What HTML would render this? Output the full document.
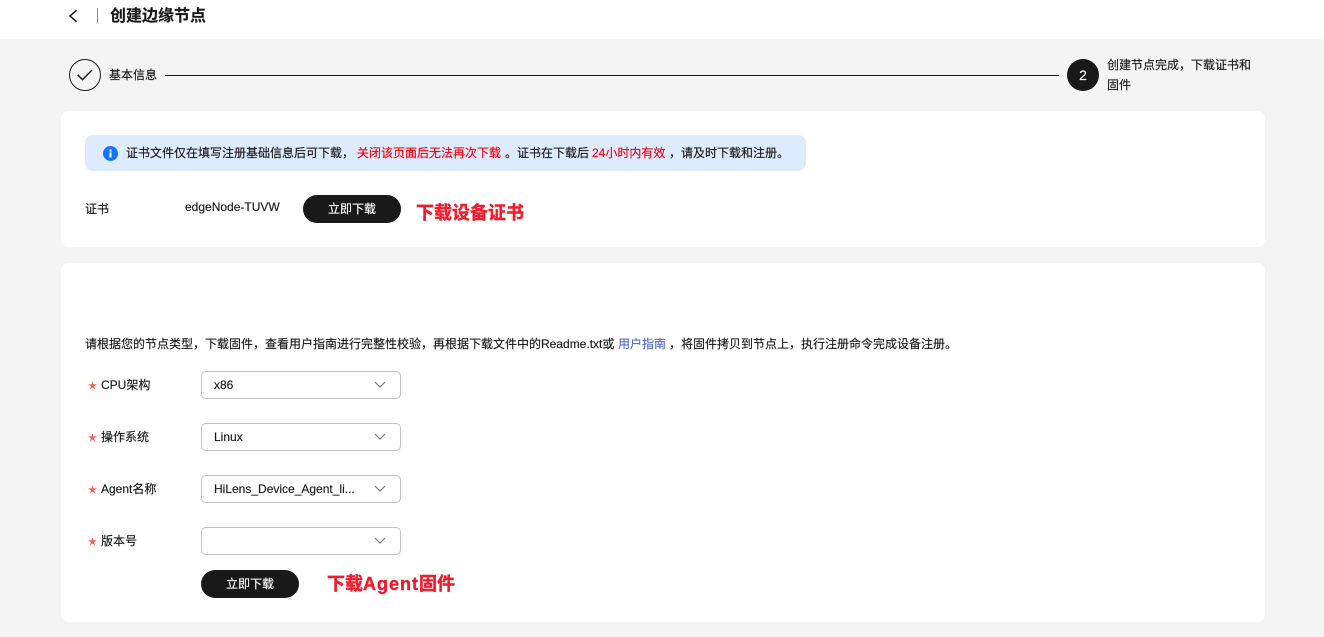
<!DOCTYPE html>
<html lang="zh"><head><meta charset="utf-8"><style>
html,body{margin:0;padding:0}
body{width:1324px;height:637px;overflow:hidden;background:#f4f4f4;position:relative;font:12px/16px "Liberation Sans","Noto Sans CJK SC",sans-serif;color:#191919}
.a{position:absolute;white-space:nowrap;-webkit-text-stroke:.15px currentColor}
.card{position:absolute;background:#fff;border-radius:8px}
.btn{position:absolute;width:98px;height:28px;border-radius:14px;background:#191919;color:#fff;text-align:center;line-height:28px;-webkit-text-stroke:.15px #fff}
.sel{position:absolute;left:201px;width:198px;height:26px;border:1px solid #c2c2c2;border-radius:5px;background:#fff;line-height:26px;-webkit-text-stroke:.15px #191919}
.sel span{position:absolute;left:12px;top:0}
.sel svg{position:absolute;left:172px;top:9px}
.star{position:absolute;left:88px}
.r{color:#f5000f}
.red{position:absolute;color:#f01c2e;font-size:18px;font-weight:bold;line-height:24px;white-space:nowrap;-webkit-text-stroke:.4px #f01c2e}
</style></head><body>
<div class="a" style="left:0;top:0;width:1324px;height:39px;background:#fff"></div>
<svg class="a" style="left:66px;top:8px" width="14" height="16" viewBox="0 0 14 16"><path d="M10.500 2.300L4 8l6.500 5.700" fill="none" stroke="#191919" stroke-width="1.500"/></svg>
<div class="a" style="left:97px;top:8px;width:1px;height:15px;background:#8a8a8a"></div>
<div class="a" style="left:110px;top:5px;font-size:16px;line-height:23px;font-weight:bold">创建边缘节点</div>

<svg class="a" style="left:69px;top:59px" width="32" height="32" viewBox="0 0 32 32"><circle cx="16" cy="16" r="15.500" fill="none" stroke="#191919"/><path d="M8.700 15.800l4.800 4.800 9.500-9.500" fill="none" stroke="#191919" stroke-width="1.500"/></svg>
<div class="a" style="left:109px;top:67px">基本信息</div>
<div class="a" style="left:165px;top:75px;width:894px;height:1px;background:#191919"></div>
<div class="a" style="left:1067px;top:59px;width:32px;height:32px;border-radius:50%;background:#191919;color:#fff;text-align:center;line-height:32px;font-size:14px">2</div>
<div class="a" style="left:1107px;top:55px;line-height:20px;width:150px;white-space:normal">创建节点完成，下载证书和固件</div>

<div class="card" style="left:61px;top:111px;width:1204px;height:136px"></div>
<div class="a" style="left:85px;top:135px;width:721px;height:36px;background:#dcebfd;border-radius:8px"></div>
<svg class="a" style="left:103px;top:146px" width="15" height="15" viewBox="0 0 15 15"><circle cx="7.500" cy="7.500" r="7.500" fill="#1476ff"/><rect x="6.500" y="6.500" width="2" height="5" fill="#fff"/><rect x="6.500" y="3.500" width="2" height="2" fill="#fff"/></svg>
<div class="a" style="left:126px;top:145px">证书文件仅在填写注册基础信息后可下载，</div>
<div class="a r" style="left:357px;top:145px">关闭该页面后无法再次下载</div>
<div class="a" style="left:505px;top:145px">。证书在下载后</div>
<div class="a r" style="left:592px;top:145px">24小时内有效</div>
<div class="a" style="left:669px;top:145px">，</div>
<div class="a" style="left:681px;top:145px">请及时下载和注册。</div>
<div class="a" style="left:85px;top:201px">证书</div>
<div class="a" style="left:185px;top:199px">edgeNode-TUVW</div>
<div class="btn" style="left:303px;top:195px">立即下载</div>
<div class="red" style="left:416px;top:201px">下载设备证书</div>

<div class="card" style="left:61px;top:263px;width:1204px;height:359px"></div>
<div class="a" style="left:85px;top:336px">请根据您的节点类型，下载固件，查看用户指南进行完整性校验，再根据下载文件中的Readme.txt或</div>
<div class="a" style="left:618px;top:336px;color:#526ecc">用户指南</div>
<div class="a" style="left:669px;top:336px">，</div>
<div class="a" style="left:681px;top:336px">将固件拷贝到节点上，执行注册命令完成设备注册。</div>

<svg class="star" style="top:381px" width="9" height="9" viewBox="0 0 9 9"><path d="M4.500 0L5.400 3.300 9 3.400 6 5.300 7.300 8.800 4.500 6.500 1.700 8.800 3 5.300 0 3.400 3.600 3.300Z" fill="#f4605a"/></svg><div class="a" style="left:101px;top:377px">CPU架构</div>
<div class="sel" style="top:371px"><span>x86</span><svg width="12" height="8" viewBox="0 0 12 8"><path d="M1 1l5 5 5-5" fill="none" stroke="#7a7a7a" stroke-width="1.200"/></svg></div>
<svg class="star" style="top:433px" width="9" height="9" viewBox="0 0 9 9"><path d="M4.500 0L5.400 3.300 9 3.400 6 5.300 7.300 8.800 4.500 6.500 1.700 8.800 3 5.300 0 3.400 3.600 3.300Z" fill="#f4605a"/></svg><div class="a" style="left:101px;top:429px">操作系统</div>
<div class="sel" style="top:423px"><span>Linux</span><svg width="12" height="8" viewBox="0 0 12 8"><path d="M1 1l5 5 5-5" fill="none" stroke="#7a7a7a" stroke-width="1.200"/></svg></div>
<svg class="star" style="top:485px" width="9" height="9" viewBox="0 0 9 9"><path d="M4.500 0L5.400 3.300 9 3.400 6 5.300 7.300 8.800 4.500 6.500 1.700 8.800 3 5.300 0 3.400 3.600 3.300Z" fill="#f4605a"/></svg><div class="a" style="left:101px;top:481px">Agent名称</div>
<div class="sel" style="top:475px"><span>HiLens_Device_Agent_li...</span><svg width="12" height="8" viewBox="0 0 12 8"><path d="M1 1l5 5 5-5" fill="none" stroke="#7a7a7a" stroke-width="1.200"/></svg></div>
<svg class="star" style="top:537px" width="9" height="9" viewBox="0 0 9 9"><path d="M4.500 0L5.400 3.300 9 3.400 6 5.300 7.300 8.800 4.500 6.500 1.700 8.800 3 5.300 0 3.400 3.600 3.300Z" fill="#f4605a"/></svg><div class="a" style="left:101px;top:533px">版本号</div>
<div class="sel" style="top:527px"><svg width="12" height="8" viewBox="0 0 12 8"><path d="M1 1l5 5 5-5" fill="none" stroke="#7a7a7a" stroke-width="1.200"/></svg></div>
<div class="btn" style="left:201px;top:570px">立即下载</div>
<div class="red" style="left:327px;top:572px">下载<span style="letter-spacing:1px">Agent</span>固件</div>
</body></html>
